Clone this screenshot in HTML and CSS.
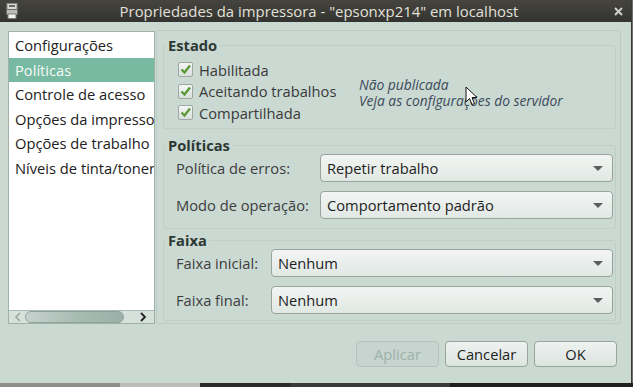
FILE: index.html
```html
<!DOCTYPE html>
<html lang="pt">
<head>
    <meta charset="UTF-8">
    <title>Propriedades da impressora</title>
    <link rel="stylesheet" href="styles.css">
</head>
<body>
<div id="window">
    <div id="titlebar">
        <svg class="printer" width="12" height="16" viewBox="0 0 12 16">
            <rect x="1" y="0.5" width="10" height="6" fill="#d8d8d4" stroke="#8a8a86"/>
            <rect x="3" y="2" width="6" height="2" fill="#6a6a66"/>
            <rect x="0.5" y="6.5" width="11" height="5" fill="#bdbdb8" stroke="#6c6c68"/>
            <rect x="2" y="11" width="8" height="4.5" fill="#f2f2ee" stroke="#7d7d79"/>
        </svg>
        <span class="title">Propriedades da impressora - "epsonxp214" em localhost</span>
        <svg class="close" width="9" height="9" viewBox="0 0 9 9">
            <path d="M1 1L8 8M8 1L1 8" stroke="#cfcfca" stroke-width="2"/>
        </svg>
    </div>
    <div id="main">
        <div id="sidebar">
            <ul class="list">
                <li>Configurações</li>
                <li class="selected">Políticas</li>
                <li>Controle de acesso</li>
                <li>Opções da impressora</li>
                <li>Opções de trabalho</li>
                <li>Níveis de tinta/toner</li>
            </ul>
            <div class="hscroll">
                <svg class="arr" width="8" height="10" viewBox="0 0 8 10"><path d="M6 1L2 5L6 9" fill="none" stroke="#9aa8a2" stroke-width="1.6"/></svg>
                <div class="thumb"></div>
                <svg class="arr right" width="8" height="10" viewBox="0 0 8 10"><path d="M2 1L6 5L2 9" fill="none" stroke="#222" stroke-width="1.8"/></svg>
            </div>
        </div>
        <div id="page">
            <fieldset class="estado">
                <legend>Estado</legend>
                <div class="checks">
                    <label class="check"><span class="box"><svg width="13" height="13" viewBox="0 0 13 13"><path d="M2.5 6.5L5.5 9.5L11 2.5" fill="none" stroke="#5b9a37" stroke-width="2.4"/></svg></span>Habilitada</label>
                    <label class="check"><span class="box"><svg width="13" height="13" viewBox="0 0 13 13"><path d="M2.5 6.5L5.5 9.5L11 2.5" fill="none" stroke="#5b9a37" stroke-width="2.4"/></svg></span>Aceitando trabalhos</label>
                    <label class="check"><span class="box"><svg width="13" height="13" viewBox="0 0 13 13"><path d="M2.5 6.5L5.5 9.5L11 2.5" fill="none" stroke="#5b9a37" stroke-width="2.4"/></svg></span>Compartilhada</label>
                </div>
                <div class="note">
                    <p>Não publicada</p>
                    <p>Veja as configurações do servidor</p>
                </div>
            </fieldset>
            <fieldset class="politicas">
                <legend>Políticas</legend>
                <div class="row">
                    <span class="lbl">Política de erros:</span>
                    <div class="combo">Repetir trabalho<span class="tri"></span></div>
                </div>
                <div class="row">
                    <span class="lbl">Modo de operação:</span>
                    <div class="combo">Comportamento padrão<span class="tri"></span></div>
                </div>
            </fieldset>
            <fieldset class="faixa">
                <legend>Faixa</legend>
                <div class="row">
                    <span class="lbl">Faixa inicial:</span>
                    <div class="combo">Nenhum<span class="tri"></span></div>
                </div>
                <div class="row">
                    <span class="lbl">Faixa final:</span>
                    <div class="combo">Nenhum<span class="tri"></span></div>
                </div>
            </fieldset>
        </div>
    </div>
    <div id="buttons">
        <button class="btn disabled">Aplicar</button>
        <button class="btn">Cancelar</button>
        <button class="btn">OK</button>
    </div>
    <svg class="cursor" width="13" height="20" viewBox="0 0 13 20">
        <path d="M1 1L1 16L4.5 12.5L7 18.5L9.5 17.5L7 11.5L12 11.5Z" fill="#fff" stroke="#111" stroke-width="1"/>
    </svg>
</div>
<div id="taskbar">
    <span class="t1"></span><span class="t2"></span><span class="t3"></span><span class="t4"></span>
</div>
</body>
</html>
```

FILE: styles.css
```css
*{
    margin: 0;
    padding: 0;
    box-sizing: border-box;
}
html,body{
    width: 633px;
    height: 387px;
    overflow: hidden;
    background: #6e6e6a;
}
body{
    font-family: "Open Sans", "DejaVu Sans", sans-serif;
    font-size: 14.7px;
    color: #3c3c3c;
}
#window{
    position: relative;
    width: 632px;
    height: 383px;
    background: #cbd9d3;
    border-right: 1px solid #3a3a36;
    display: flex;
    flex-direction: column;
}
#titlebar{
    height: 22px;
    background: linear-gradient(#45443f, #333330);
    display: flex;
    align-items: center;
    padding: 0 8px 0 6px;
    color: #e3e0d8;
}
#titlebar .printer{
    flex: none;
}
#titlebar .title{
    flex: 1;
    text-align: center;
    font-size: 14.9px;
    margin-left: 6px;
}
#titlebar .close{
    flex: none;
}
#main{
    display: flex;
    padding: 8px 10px 0 8px;
    gap: 1px;
}
#sidebar{
    width: 147px;
    height: 293px;
    margin-top: 1px;
    background: #fff;
    border: 1px solid #9fb2aa;
    display: flex;
    flex-direction: column;
    overflow: hidden;
}
.list{
    list-style: none;
    flex: 1;
    padding-top: 1px;
}
.list li{
    height: 24.6px;
    line-height: 24px;
    padding-left: 6px;
    white-space: nowrap;
    color: #222;
}
.list li.selected{
    background: #78b9a2;
    color: #f4faf7;
}
.hscroll{
    height: 13px;
    background: #d6e1dc;
    border-top: 1px solid #a9bab3;
    display: flex;
    align-items: center;
    padding: 0 2px;
}
.hscroll .arr{
    flex: none;
    margin: 0 3px;
}
.hscroll .right{
    margin-left: auto;
    margin-right: 5px;
}
.hscroll .thumb{
    width: 99px;
    height: 12px;
    border: 1px solid #8fa39b;
    border-radius: 6px;
    background: linear-gradient(90deg, #c6d3ce, #a9bcb4 50%, #9bb0a8);
}
#page{
    flex: 1;
    height: 294px;
    border: 1px solid #bccbc5;
    border-radius: 2px;
    padding: 0 4px 0 6px;
}
fieldset{
    border: 1px solid #bfcfc8;
    border-radius: 3px;
    padding: 0 2px 0 0;
}
legend{
    font-weight: bold;
    color: #2d3833;
    padding: 0 2px;
    margin-left: 2px;
    line-height: 16px;
}
.estado{
    margin-top: 6px;
    height: 92px;
    display: flex;
    align-items: center;
    padding-top: 1px;
}
.checks{
    display: flex;
    flex-direction: column;
    width: 195px;
    padding-left: 14px;
}
.check{
    display: flex;
    align-items: center;
    height: 21.5px;
    color: #3a3a3a;
}
.box{
    width: 15px;
    height: 15px;
    border: 1px solid #9ea7a2;
    border-radius: 2px;
    background: linear-gradient(#f4f6f5, #d9e0dc);
    margin-right: 6px;
    display: flex;
    align-items: center;
    justify-content: center;
}
.note{
    font-style: italic;
    color: #3b4a5a;
    font-size: 13.8px;
    line-height: 16px;
    margin-top: 3px;
}
.politicas{
    margin-top: 8px;
    height: 92px;
}
.faixa{
    margin-top: 3px;
    height: 89px;
}
.row{
    display: flex;
    align-items: center;
    height: 28px;
    margin-top: 1px;
    margin-bottom: 9px;
    padding-left: 12px;
}
.lbl{
    color: #3d3d3d;
    white-space: nowrap;
}
.politicas .lbl{
    width: 144px;
}
.faixa .lbl{
    width: 95px;
}
.combo{
    position: relative;
    flex: 1;
    height: 28px;
    border: 1px solid #99a49e;
    border-radius: 4px;
    background: linear-gradient(#f2f5f3, #e1e8e4);
    color: #1e1e1e;
    line-height: 26px;
    padding-left: 6px;
}
.combo .tri{
    position: absolute;
    right: 9px;
    top: 11px;
    border-left: 5px solid transparent;
    border-right: 5px solid transparent;
    border-top: 5px solid #5a5e5c;
}
#buttons{
    display: flex;
    justify-content: flex-end;
    gap: 6px;
    padding: 17px 14px 0 0;
}
.btn{
    width: 83px;
    height: 26px;
    font-family: "Open Sans", "DejaVu Sans", sans-serif;
    font-size: 14.7px;
    color: #1e1e1e;
    border: 1px solid #98a49e;
    border-radius: 4px;
    background: linear-gradient(#eef2f0, #dce4e0);
}
.btn.disabled{
    color: #9fb0a9;
    border-color: #b4c3bc;
    background: #c6d5cf;
}
.cursor{
    position: absolute;
    left: 465px;
    top: 86px;
}
#taskbar{
    height: 4px;
    display: flex;
    background: #1f1f1d;
}
#taskbar span{
    display: block;
    height: 4px;
}
.t1{ width: 120px; background: #8d8d8a; }
.t2{ width: 80px; background: #bdbdba; }
.t3{ width: 90px; background: #2b2b29; }
.t4{ width: 160px; background: #3a3a38; }
```
